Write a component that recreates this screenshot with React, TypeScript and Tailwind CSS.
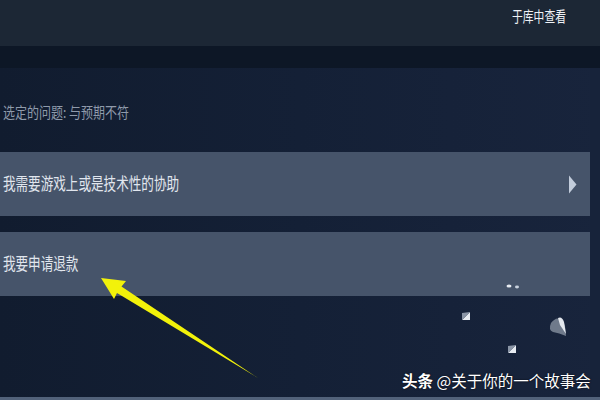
import React from "react";

const cjk = { fontFamily: '"Noto Sans CJK SC", "Noto Sans", sans-serif' };

function Chevron() {
  return (
    <svg width="9" height="19" viewBox="0 0 9 19" className="shrink-0">
      <path d="M1 0.5 L8.5 9.5 L1 18.5 Z" fill="#c3cddc" />
    </svg>
  );
}

function Option({ label, chevron }: { label: string; chevron?: boolean }) {
  return (
    <div className="h-[64px] w-[590px] bg-[#46546a] flex items-center justify-between pr-[13px]">
      <span
        className="text-[17px] text-[#e1e6ee] origin-left scale-x-[0.74] whitespace-nowrap pl-[4px] -mt-[2px]"
        style={cjk}
      >
        {label}
      </span>
      {chevron && <Chevron />}
    </div>
  );
}

function Arrow() {
  return (
    <svg
      className="absolute left-0 top-0 pointer-events-none"
      width="600"
      height="400"
      viewBox="0 0 600 400"
    >
      <polygon
        points="101,278 126,281 121.5,286.5 258,378 117,293 114,299"
        fill="#f2f20a"
      />
    </svg>
  );
}

function Specks() {
  return (
    <svg
      className="absolute left-0 top-0 pointer-events-none"
      width="600"
      height="400"
      viewBox="0 0 600 400"
    >
      <ellipse cx="509" cy="286" rx="2.5" ry="1.6" fill="#e8ecf2" />
      <ellipse cx="517" cy="287" rx="2" ry="1.4" fill="#c9d2de" />
      <polygon points="462,320 470,312 470,320" fill="#e7ebf1" />
      <polygon points="462,320 462,313 470,312" fill="#8a95a6" />
      <polygon points="508,353 516,345 516,353" fill="#e7ebf1" />
      <polygon points="508,353 508,346 516,345" fill="#8a95a6" />
      <path d="M551 323 Q556 317 559 319 Q563 318 565 326 L566 336 Q559 333 553 332 Q548 330 551 323 Z" fill="#6f7a8b" />
      <path d="M558 318 Q562 316 564 322 L566 334 Q562 328 560 325 Z" fill="#e4e8ee" />
    </svg>
  );
}

export default function App() {
  return (
    <div className="relative w-[600px] h-[400px] overflow-hidden bg-[#131f33] flex flex-col" style={cjk}>
      {/* header bar */}
      <div className="h-[46px] bg-[#1c2735] flex items-start justify-end pr-[34px] pt-[5px] shrink-0">
        <span className="text-[15px] text-[#eef1f5] origin-right scale-x-[0.72] whitespace-nowrap">
          于库中查看
        </span>
      </div>
      {/* shadow band */}
      <div className="h-[22px] bg-[#0d1726] shrink-0" />
      {/* main content */}
      <div className="flex-1 bg-gradient-to-r from-[#111c2f] via-[#142036] to-[#18243c] flex flex-col">
        <div className="h-[84px] flex items-center pt-[5px] pl-[3px]">
          <span className="text-[15px] text-[#8f9aab] origin-left scale-x-[0.8] whitespace-nowrap">
            选定的问题: 与预期不符
          </span>
        </div>
        <div className="flex flex-col gap-[16px]">
          <Option label="我需要游戏上或是技术性的协助" chevron />
          <Option label="我要申请退款" />
        </div>
        <div className="flex-1" />
        <div className="h-[3px] bg-[#52627a]" />
      </div>
      <div className="absolute right-0 top-[68px] bottom-[3px] w-[10px] bg-[#17233a]" />
      <Arrow />
      <Specks />
      {/* watermark */}
      <div
        className="absolute left-[402px] top-[369px] text-[15.5px] text-white whitespace-nowrap [text-shadow:0_0_2px_rgba(0,0,0,0.8)]"
        style={cjk}
      >
        <span className="font-bold">头条</span> @关于你的一个故事会
      </div>
    </div>
  );
}
